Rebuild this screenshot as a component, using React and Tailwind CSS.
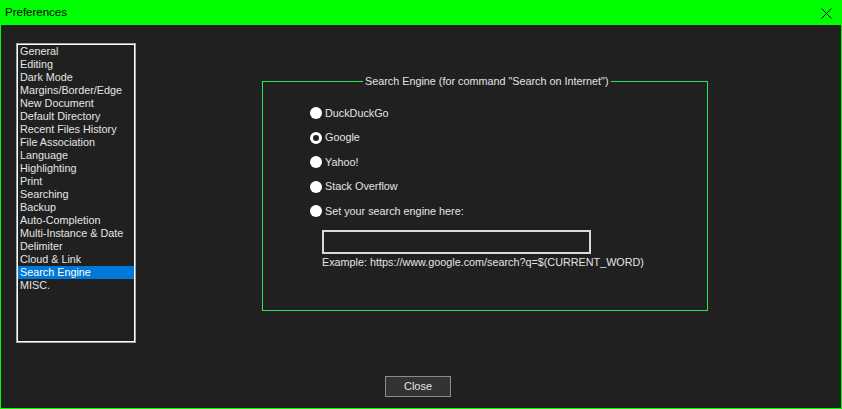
const items = [
  'General',
  'Editing',
  'Dark Mode',
  'Margins/Border/Edge',
  'New Document',
  'Default Directory',
  'Recent Files History',
  'File Association',
  'Language',
  'Highlighting',
  'Print',
  'Searching',
  'Backup',
  'Auto-Completion',
  'Multi-Instance & Date',
  'Delimiter',
  'Cloud & Link',
  'Search Engine',
  'MISC.',
];

const engines = [
  { label: 'DuckDuckGo' },
  { label: 'Google', checked: true },
  { label: 'Yahoo!' },
  { label: 'Stack Overflow' },
  { label: 'Set your search engine here:' },
];

function Radio({ checked }) {
  return checked ? (
    <span className="w-[12px] h-[12px] rounded-full border-[3px] border-white bg-[#202020] shrink-0" />
  ) : (
    <span className="w-[12px] h-[12px] rounded-full bg-white shrink-0" />
  );
}

export default function App() {
  return (
    <div
      className="w-[842px] h-[409px] bg-[#00ff00] flex flex-col px-px pb-px text-[10.8px] leading-[13px]"
      style={{ fontFamily: '"Liberation Sans", Arial, sans-serif' }}
    >
      {/* Title bar */}
      <div className="h-[25px] shrink-0 flex items-center justify-between pl-[4px] pr-[9px] text-black text-[11.5px]">
        <span>Preferences</span>
        <svg width="11" height="11" viewBox="0 0 11 11" className="mt-[1px]">
          <path d="M0.5 0.5 L10.5 10.5 M10.5 0.5 L0.5 10.5" stroke="#000" strokeWidth="1" />
        </svg>
      </div>

      {/* Body */}
      <div className="flex-1 bg-[#202020] text-[#e4e4e4]">
        <div className="flex items-start">
          {/* Category list */}
          <div className="ml-[15px] mt-[18px] w-[120px] h-[300px] border border-[#a6a6a6]">
            <div className="h-full border border-white">
              {items.map((it) => (
                <div
                  key={it}
                  className={
                    'h-[13px] pl-[2px] whitespace-nowrap ' +
                    (it === 'Search Engine' ? 'bg-[#0078d7] text-white' : '')
                  }
                >
                  {it}
                </div>
              ))}
            </div>
          </div>

          {/* Group box */}
          <div className="relative ml-[126px] mt-[56px] w-[446px] h-[230px] border border-[#2be358]">
            <span className="absolute left-[100px] top-[-7px] px-[2px] bg-[#202020] leading-[13px] whitespace-nowrap">
              Search Engine (for command "Search on Internet")
            </span>
            <div className="pl-[47px] pt-[19px] flex flex-col">
              {engines.map((e) => (
                <div key={e.label} className="h-[24.5px] flex items-center gap-[3px]">
                  <Radio checked={e.checked} />
                  <span>{e.label}</span>
                </div>
              ))}
              <div className="ml-[12px] mt-[6px] w-[269px] h-[24px] border-2 border-[#dadada] bg-[#202020]" />
              <div className="ml-[12px] mt-[2px] whitespace-nowrap">
                Example: https://www.google.com/search?q=$(CURRENT_WORD)
              </div>
            </div>
          </div>
        </div>

        {/* Close */}
        <div className="pl-[384px] mt-[33px]">
          <button className="w-[66px] h-[21px] bg-[#333333] border border-[#8c8c8c] text-[#e4e4e4] text-[11px] flex items-center justify-center">
            Close
          </button>
        </div>
      </div>
    </div>
  );
}
